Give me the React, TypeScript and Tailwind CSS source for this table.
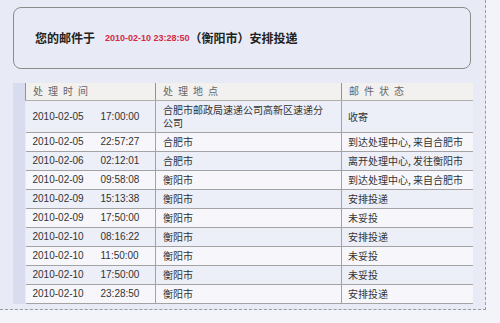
import React from "react";

const rows = [
  { date: "2010-02-05", time: "17:00:00", place: "合肥市邮政局速递公司高新区速递分公司", status: "收寄" },
  { date: "2010-02-05", time: "22:57:27", place: "合肥市", status: "到达处理中心, 来自合肥市" },
  { date: "2010-02-06", time: "02:12:01", place: "合肥市", status: "离开处理中心, 发往衡阳市" },
  { date: "2010-02-09", time: "09:58:08", place: "衡阳市", status: "到达处理中心, 来自合肥市" },
  { date: "2010-02-09", time: "15:13:38", place: "衡阳市", status: "安排投递" },
  { date: "2010-02-09", time: "17:50:00", place: "衡阳市", status: "未妥投" },
  { date: "2010-02-10", time: "08:16:22", place: "衡阳市", status: "安排投递" },
  { date: "2010-02-10", time: "11:50:00", place: "衡阳市", status: "未妥投" },
  { date: "2010-02-10", time: "17:50:00", place: "衡阳市", status: "未妥投" },
  { date: "2010-02-10", time: "23:28:50", place: "衡阳市", status: "安排投递" },
];

const cjk = "font-['Noto_Sans_CJK_SC',sans-serif]";
const num = "font-['Liberation_Sans','Noto_Sans_CJK_SC',sans-serif]";

export default function App() {
  return (
    <div className="w-[500px] h-[323px] bg-[#f3f4f9] overflow-hidden">
      <div className="w-[486px] h-[310px] bg-[#e8eaf5] border-r border-b border-dashed border-[#9a9a9a] pl-[13px] pt-[7px]">
        <div className="w-[458px] h-[62px] border border-[#8c8c8c] rounded-[8px] flex items-center pl-[21px]">
          <span className={`${cjk} text-[12px] font-bold text-[#222] leading-none`}>您的邮件于</span>
          <span className={`${num} text-[9px] font-bold text-[#d42a45] leading-none ml-[10px]`}>2010-02-10 23:28:50</span>
          <span className={`${cjk} text-[12px] font-bold text-[#222] leading-none`}>（衡阳市）安排投递</span>
        </div>

        <div className="mt-[14px] w-[459px] border-l-[12px] border-[#d9dcee]">
          <table className="w-[447px] table-fixed border-collapse">
            <colgroup>
              <col className="w-[130px]" />
              <col className="w-[186px]" />
              <col className="w-[131px]" />
            </colgroup>
            <thead>
              <tr className="h-[17px] bg-[#f3f1f0]">
                {["处理时间", "处理地点", "邮件状态"].map((h) => (
                  <th
                    key={h}
                    className={`${cjk} border-l border-[#cf7a7a] border-b border-b-[#b0b0b0] pl-[7px] text-left font-normal text-[10px] tracking-[5px] text-[#666] leading-[16px]`}
                  >
                    {h}
                  </th>
                ))}
              </tr>
            </thead>
            <tbody>
              {rows.map((r, i) => (
                <tr
                  key={i}
                  className={`${i % 2 === 0 ? "bg-[#eceef8]" : "bg-[#f7f7fb]"} ${i === 0 ? "h-[32px]" : "h-[19px]"} border-b border-[#a3a3a3]`}
                >
                  <td className={`${num} pl-[7px] text-[10px] text-[#333] leading-[13px]`}>
                    <span className="inline-block w-[68px]">{r.date}</span>
                    <span>{r.time}</span>
                  </td>
                  <td className={`${cjk} border-l border-[#a3a3a3] pl-[7px] pr-[10px] text-[10px] text-[#333] leading-[13px] break-all`}>
                    {r.place}
                  </td>
                  <td className={`${cjk} border-l border-[#a3a3a3] pl-[6px] text-[10px] text-[#333] leading-[13px] whitespace-nowrap`}>
                    {r.status}
                  </td>
                </tr>
              ))}
            </tbody>
          </table>
        </div>
      </div>
    </div>
  );
}
